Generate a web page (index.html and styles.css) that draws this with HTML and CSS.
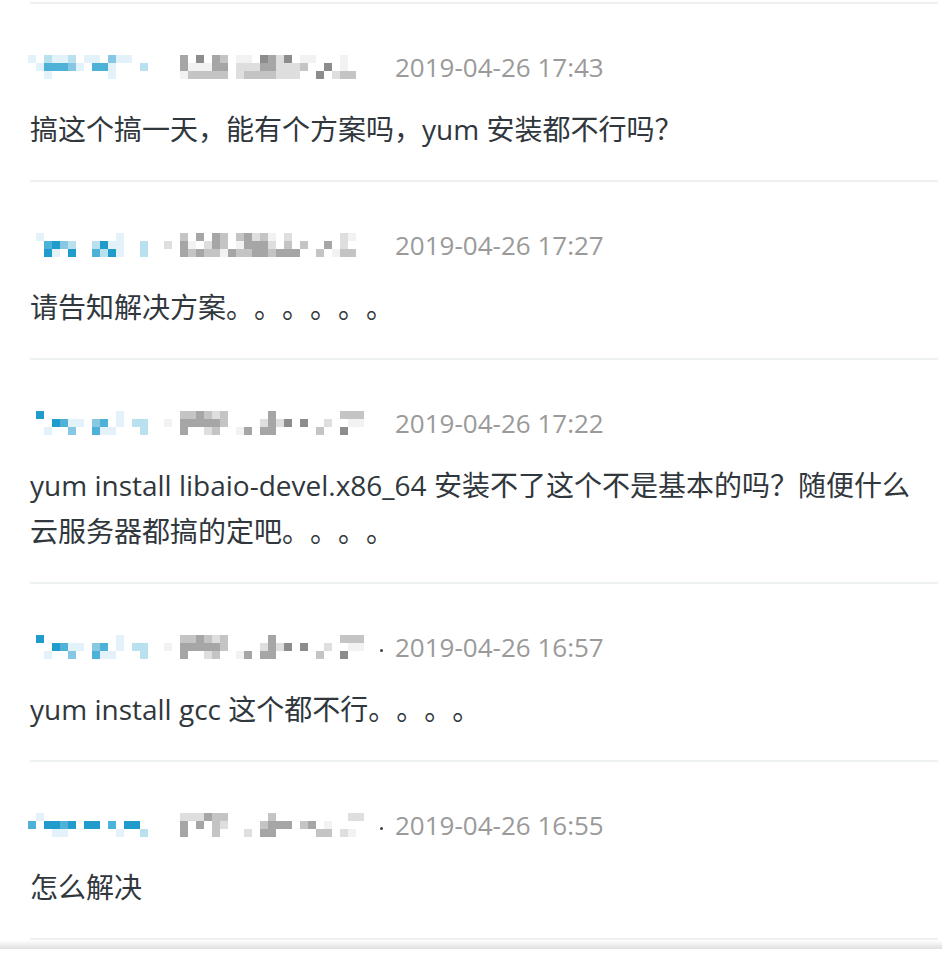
FILE: index.html
```html
<!DOCTYPE html>
<html lang="zh-CN">
<head>
<meta charset="utf-8">
<title>评论</title>
<link rel="stylesheet" href="styles.css">
</head>
<body>
<div class="page">
  <ul class="comments">
    <li class="comment">
      <div class="meta">
        <svg class="name" viewBox="0 0 44 4" width="352" height="32" shape-rendering="crispEdges">
          <g class="a"><rect x="0" y="0.5" width="1" height="1"/><rect x="3" y="0.5" width="2" height="1"/><rect x="7" y="0.5" width="2" height="1"/><rect x="11" y="0.5" width="2" height="1"/><rect x="1" y="1.5" width="1" height="1"/><rect x="6" y="1.5" width="1" height="1"/><rect x="10" y="1.5" width="1" height="1"/><rect x="2" y="2.5" width="1" height="1"/><rect x="10" y="2.5" width="1" height="1"/></g>
          <g class="b"><rect x="2" y="0.5" width="1" height="1"/><rect x="5" y="0.5" width="1" height="1"/><rect x="14" y="1.5" width="1" height="1"/></g>
          <g class="c"><rect x="10" y="0.5" width="1" height="1"/><rect x="5" y="1.5" width="1" height="1"/></g>
          <g class="d"><rect x="2" y="1.5" width="3" height="1"/><rect x="8" y="1.5" width="2" height="1"/></g>
          <g class="g1"><rect x="26" y="0.5" width="2" height="1"/><rect x="34" y="0.5" width="2" height="1"/><rect x="39" y="0.5" width="1" height="1"/><rect x="20" y="1.5" width="3" height="1"/><rect x="39" y="1.5" width="1" height="1"/><rect x="19" y="2.5" width="1" height="1"/></g>
          <g class="g2"><rect x="31" y="0.5" width="1" height="1"/><rect x="26" y="1.5" width="3" height="1"/><rect x="31" y="1.5" width="3" height="1"/><rect x="26" y="2.5" width="1" height="1"/><rect x="31" y="2.5" width="3" height="1"/><rect x="38" y="2.5" width="1" height="1"/></g>
          <g class="g3"><rect x="24" y="0.5" width="1" height="1"/><rect x="34" y="1.5" width="1" height="1"/><rect x="20" y="2.5" width="5" height="1"/><rect x="27" y="2.5" width="4" height="1"/><rect x="39" y="2.5" width="2" height="1"/></g>
          <g class="g4"><rect x="19" y="0.5" width="1" height="1"/><rect x="23" y="0.5" width="1" height="1"/><rect x="30" y="0.5" width="1" height="1"/><rect x="19" y="1.5" width="1" height="1"/><rect x="23" y="1.5" width="2" height="1"/><rect x="29" y="1.5" width="2" height="1"/></g>
          <g class="g5"><rect x="21" y="0.5" width="1" height="1"/><rect x="29" y="0.5" width="1" height="1"/><rect x="32" y="0.5" width="1" height="1"/><rect x="37" y="1.5" width="1" height="1"/><rect x="36" y="2.5" width="1" height="1"/></g>
        </svg>
        <span class="sep"></span>
        <time class="date">2019-04-26 17:43</time>
      </div>
      <p class="text">搞这个搞一天，能有个方案吗，yum 安装都不行吗？</p>
    </li>
    <li class="comment">
      <div class="meta">
        <svg class="name" viewBox="0 0 44 4" width="352" height="32" shape-rendering="crispEdges">
          <g class="a"><rect x="1" y="0.5" width="1" height="1"/><rect x="11" y="0.5" width="1" height="1"/><rect x="10" y="1.5" width="2" height="1"/><rect x="3" y="2.5" width="1" height="1"/><rect x="11" y="2.5" width="1" height="1"/></g>
          <g class="b"><rect x="5" y="1.5" width="1" height="1"/><rect x="8" y="1.5" width="1" height="1"/><rect x="14" y="1.5" width="1" height="2"/><rect x="9" y="2.5" width="1" height="1"/></g>
          <g class="c"><rect x="4" y="1.5" width="1" height="1"/></g>
          <g class="d"><rect x="2" y="1.5" width="1" height="1"/><rect x="8" y="2.5" width="1" height="1"/></g>
          <g class="e"><rect x="3" y="1.5" width="1" height="1"/><rect x="9" y="1.5" width="1" height="1"/><rect x="2" y="2.5" width="1" height="1"/><rect x="5" y="2.5" width="1" height="1"/><rect x="10" y="2.5" width="1" height="1"/></g>
          <g class="g1"><rect x="30" y="0.5" width="1" height="1"/><rect x="40" y="0.5" width="1" height="1"/><rect x="20" y="1.5" width="1" height="1"/><rect x="26" y="1.5" width="1" height="1"/><rect x="24" y="2.5" width="1" height="1"/><rect x="38" y="2.5" width="1" height="1"/></g>
          <g class="g2"><rect x="28" y="0.5" width="1" height="1"/><rect x="32" y="0.5" width="1" height="1"/><rect x="39" y="0.5" width="1" height="1"/><rect x="17" y="1.5" width="1" height="1"/><rect x="22" y="1.5" width="1" height="1"/><rect x="30" y="1.5" width="1" height="1"/><rect x="39" y="1.5" width="1" height="1"/></g>
          <g class="g3"><rect x="19" y="0.5" width="1" height="1"/><rect x="24" y="0.5" width="1" height="1"/><rect x="26" y="0.5" width="1" height="1"/><rect x="29" y="0.5" width="1" height="1"/><rect x="24" y="1.5" width="1" height="1"/><rect x="32" y="1.5" width="1" height="1"/><rect x="34" y="1.5" width="1" height="1"/><rect x="20" y="2.5" width="1" height="1"/><rect x="22" y="2.5" width="2" height="1"/><rect x="26" y="2.5" width="2" height="1"/><rect x="30" y="2.5" width="1" height="1"/><rect x="36" y="2.5" width="1" height="1"/><rect x="39" y="2.5" width="2" height="1"/></g>
          <g class="g4"><rect x="21" y="0.5" width="1" height="1"/><rect x="23" y="0.5" width="1" height="1"/><rect x="27" y="0.5" width="1" height="1"/><rect x="19" y="1.5" width="1" height="1"/><rect x="23" y="1.5" width="1" height="1"/><rect x="27" y="1.5" width="3" height="1"/><rect x="37" y="1.5" width="1" height="1"/><rect x="19" y="2.5" width="1" height="1"/><rect x="21" y="2.5" width="1" height="1"/><rect x="25" y="2.5" width="1" height="1"/><rect x="28" y="2.5" width="2" height="1"/><rect x="31" y="2.5" width="3" height="1"/></g>
        </svg>
        <span class="sep"></span>
        <time class="date">2019-04-26 17:27</time>
      </div>
      <p class="text">请告知解决方案。。。。。。</p>
    </li>
    <li class="comment">
      <div class="meta">
        <svg class="name" viewBox="0 0 44 4" width="352" height="32" shape-rendering="crispEdges">
          <g class="a"><rect x="11" y="0.5" width="1" height="2"/><rect x="5" y="1.5" width="2" height="1"/><rect x="2" y="2.5" width="1" height="1"/><rect x="9" y="2.5" width="2" height="1"/></g>
          <g class="b"><rect x="13" y="1.5" width="2" height="1"/><rect x="14" y="2.5" width="1" height="1"/></g>
          <g class="c"><rect x="8" y="1.5" width="1" height="1"/><rect x="5" y="2.5" width="1" height="1"/></g>
          <g class="d"><rect x="4" y="1.5" width="1" height="1"/><rect x="9" y="1.5" width="1" height="1"/><rect x="8" y="2.5" width="1" height="1"/></g>
          <g class="e"><rect x="1" y="0.5" width="1" height="1"/><rect x="3" y="1.5" width="1" height="1"/></g>
          <g class="g1"><rect x="17" y="1.5" width="1" height="1"/><rect x="40" y="1.5" width="2" height="1"/><rect x="26" y="2.5" width="1" height="1"/></g>
          <g class="g2"><rect x="23" y="0.5" width="1" height="1"/><rect x="29" y="1.5" width="1" height="1"/><rect x="31" y="1.5" width="1" height="1"/><rect x="37" y="1.5" width="1" height="1"/><rect x="22" y="2.5" width="1" height="1"/></g>
          <g class="g3"><rect x="19" y="0.5" width="2" height="1"/><rect x="22" y="0.5" width="1" height="1"/><rect x="24" y="0.5" width="1" height="1"/><rect x="39" y="0.5" width="3" height="1"/><rect x="24" y="1.5" width="1" height="1"/><rect x="23" y="2.5" width="1" height="1"/><rect x="36" y="2.5" width="1" height="1"/></g>
          <g class="g4"><rect x="21" y="0.5" width="1" height="1"/><rect x="30" y="0.5" width="1" height="1"/><rect x="19" y="1.5" width="5" height="1"/><rect x="30" y="1.5" width="1" height="1"/><rect x="19" y="2.5" width="1" height="1"/><rect x="27" y="2.5" width="1" height="1"/><rect x="29" y="2.5" width="2" height="1"/></g>
          <g class="g5"><rect x="32" y="1.5" width="1" height="1"/><rect x="34" y="1.5" width="1" height="1"/><rect x="39" y="2.5" width="1" height="1"/></g>
        </svg>
        <span class="sep"></span>
        <time class="date">2019-04-26 17:22</time>
      </div>
      <p class="text">yum install libaio-devel.x86_64 安装不了这个不是基本的吗？随便什么<br>云服务器都搞的定吧。。。。</p>
    </li>
    <li class="comment">
      <div class="meta">
        <svg class="name" viewBox="0 0 44 4" width="352" height="32" shape-rendering="crispEdges">
          <g class="a"><rect x="11" y="0.5" width="1" height="2"/><rect x="5" y="1.5" width="2" height="1"/><rect x="2" y="2.5" width="1" height="1"/><rect x="9" y="2.5" width="2" height="1"/></g>
          <g class="b"><rect x="13" y="1.5" width="2" height="1"/><rect x="14" y="2.5" width="1" height="1"/></g>
          <g class="c"><rect x="8" y="1.5" width="1" height="1"/><rect x="5" y="2.5" width="1" height="1"/></g>
          <g class="d"><rect x="4" y="1.5" width="1" height="1"/><rect x="9" y="1.5" width="1" height="1"/><rect x="8" y="2.5" width="1" height="1"/></g>
          <g class="e"><rect x="1" y="0.5" width="1" height="1"/><rect x="3" y="1.5" width="1" height="1"/></g>
          <g class="g1"><rect x="17" y="1.5" width="1" height="1"/><rect x="40" y="1.5" width="2" height="1"/><rect x="26" y="2.5" width="1" height="1"/></g>
          <g class="g2"><rect x="23" y="0.5" width="1" height="1"/><rect x="29" y="1.5" width="1" height="1"/><rect x="31" y="1.5" width="1" height="1"/><rect x="37" y="1.5" width="1" height="1"/><rect x="22" y="2.5" width="1" height="1"/></g>
          <g class="g3"><rect x="19" y="0.5" width="2" height="1"/><rect x="22" y="0.5" width="1" height="1"/><rect x="24" y="0.5" width="1" height="1"/><rect x="39" y="0.5" width="3" height="1"/><rect x="24" y="1.5" width="1" height="1"/><rect x="23" y="2.5" width="1" height="1"/><rect x="36" y="2.5" width="1" height="1"/></g>
          <g class="g4"><rect x="21" y="0.5" width="1" height="1"/><rect x="30" y="0.5" width="1" height="1"/><rect x="19" y="1.5" width="5" height="1"/><rect x="30" y="1.5" width="1" height="1"/><rect x="19" y="2.5" width="1" height="1"/><rect x="27" y="2.5" width="1" height="1"/><rect x="29" y="2.5" width="2" height="1"/></g>
          <g class="g5"><rect x="32" y="1.5" width="1" height="1"/><rect x="34" y="1.5" width="1" height="1"/><rect x="39" y="2.5" width="1" height="1"/></g>
        </svg>
        <span class="sep"><i class="dot"></i></span>
        <time class="date">2019-04-26 16:57</time>
      </div>
      <p class="text">yum install gcc 这个都不行。。。。</p>
    </li>
    <li class="comment">
      <div class="meta">
        <svg class="name" viewBox="0 0 44 4" width="352" height="32" shape-rendering="crispEdges">
          <g class="a"><rect x="1" y="0.5" width="1" height="1"/><rect x="3" y="2.5" width="2" height="1"/><rect x="11" y="2.5" width="1" height="1"/></g>
          <g class="b"><rect x="14" y="2.5" width="1" height="1"/></g>
          <g class="d"><rect x="0" y="1.5" width="1" height="1"/><rect x="4" y="1.5" width="1" height="1"/><rect x="10" y="1.5" width="1" height="1"/></g>
          <g class="e"><rect x="2" y="1.5" width="2" height="1"/><rect x="5" y="1.5" width="1" height="1"/><rect x="7" y="1.5" width="2" height="1"/><rect x="12" y="1.5" width="2" height="1"/></g>
          <g class="g1"><rect x="37" y="1.5" width="1" height="1"/><rect x="40" y="2.5" width="1" height="1"/></g>
          <g class="g2"><rect x="19" y="0.5" width="3" height="1"/><rect x="40" y="0.5" width="2" height="1"/><rect x="24" y="1.5" width="1" height="1"/><rect x="27" y="2.5" width="1" height="1"/><rect x="39" y="2.5" width="1" height="1"/></g>
          <g class="g3"><rect x="23" y="0.5" width="2" height="1"/><rect x="30" y="0.5" width="1" height="1"/><rect x="23" y="1.5" width="1" height="1"/><rect x="29" y="1.5" width="1" height="1"/><rect x="34" y="1.5" width="1" height="1"/><rect x="23" y="2.5" width="1" height="1"/><rect x="36" y="2.5" width="2" height="1"/></g>
          <g class="g4"><rect x="22" y="0.5" width="1" height="1"/><rect x="19" y="1.5" width="1" height="1"/><rect x="21" y="1.5" width="1" height="1"/><rect x="30" y="1.5" width="3" height="1"/><rect x="35" y="1.5" width="1" height="1"/><rect x="19" y="2.5" width="1" height="1"/><rect x="29" y="2.5" width="2" height="1"/></g>
        </svg>
        <span class="sep"><i class="dot"></i></span>
        <time class="date">2019-04-26 16:55</time>
      </div>
      <p class="text">怎么解决</p>
    </li>
  </ul>
  <div class="shade"></div>
</div>
</body>
</html>
```

FILE: styles.css
```css
html, body {
  margin: 0;
  padding: 0;
  background: #ffffff;
}

.page {
  padding-top: 2px;
  font-family: "Open Sans", "Noto Sans CJK SC", sans-serif;
}

.comments {
  list-style: none;
  margin: 0 4px 0 30px;
  padding: 0;
}

.comment {
  border-top: 2px solid #eef1f1;
  padding: 40px 0 28px;
}

.comment:last-child {
  border-bottom: 2px solid #eef1f1;
}

.meta {
  display: flex;
  align-items: center;
  height: 46px;
  margin-bottom: 16px;
}

.name {
  display: block;
  margin-left: -2px;
  flex: none;
}

.name .a { fill: #e3f2f9; }
.name .b { fill: #b9e0ef; }
.name .c { fill: #86c8e3; }
.name .d { fill: #4eb1d8; }
.name .e { fill: #1f9bcc; }
.name .g1 { fill: #f2f2f2; }
.name .g2 { fill: #dedede; }
.name .g3 { fill: #c4c4c4; }
.name .g4 { fill: #a6a6a6; }
.name .g5 { fill: #8c8c8c; }

.sep {
  width: 15px;
  flex: none;
  display: flex;
  align-items: center;
  height: 46px;
}

.dot {
  display: block;
  width: 3px;
  height: 3px;
  border-radius: 50%;
  background: #3a4250;
  margin-top: 6px;
}

.date {
  font-size: 26px;
  line-height: 46px;
  color: #9a9a9a;
}

.text {
  margin: 0;
  font-size: 28px;
  line-height: 46px;
  color: #30373d;
  text-spacing-trim: space-all;
}

.shade {
  height: 9px;
  background: linear-gradient(#ffffff, #e0e0e0);
}
```
